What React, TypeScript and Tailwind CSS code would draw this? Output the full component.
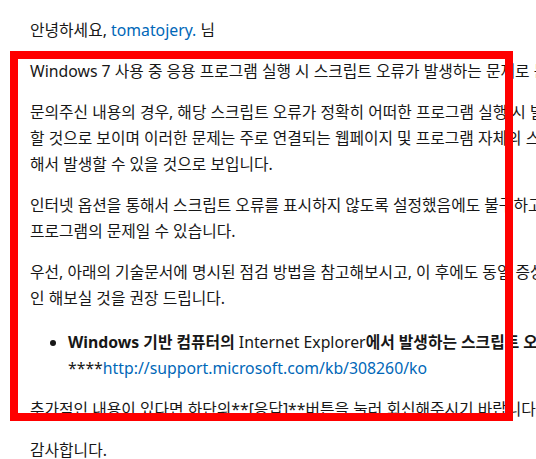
import React from 'react';

const link = 'text-[#0067b8]';

function Line({ children }: { children: React.ReactNode }) {
  return <span className="block whitespace-nowrap">{children}</span>;
}

export default function App() {
  return (
    <div
      className="relative w-[536px] h-[459px] overflow-hidden bg-white text-[#171717] text-[15.8px] leading-[26px]"
      style={{ fontFamily: '"Noto Sans", "Noto Sans CJK KR", sans-serif' }}
    >
      <div className="pl-[30px] pt-[17px]">
        <p className="mb-[15px]">
          안녕하세요, <span className={link}>tomatojery.</span> 님
        </p>
        <p className="mb-[15px]">
          <Line>Windows 7 사용 중 응용 프로그램 실행 시 스크립트 오류가 발생하는 문제로 문의하셨습니다.</Line>
        </p>
        <p className="mb-[15px]">
          <Line>문의주신 내용의 경우, 해당 스크립트 오류가 정확히 어떠한 프로그램 실행 시 발생하는지 확인이 필요</Line>
          <Line>할 것으로 보이며 이러한 문제는 주로 연결되는 웹페이지 및 프로그램 자체의 스크립트 오류로 인</Line>
          <Line>해서 발생할 수 있을 것으로 보입니다.</Line>
        </p>
        <p className="mb-[15px]">
          <Line>인터넷 옵션을 통해서 스크립트 오류를 표시하지 않도록 설정했음에도 불구하고 증상이 지속된다면 해당</Line>
          <Line>프로그램의 문제일 수 있습니다.</Line>
        </p>
        <p className="mb-[18px]">
          <Line>우선, 아래의 기술문서에 명시된 점검 방법을 참고해보시고, 이 후에도 동일 증상이 발생한다면 프로그램 제조사에 확</Line>
          <Line>인 해보실 것을 권장 드립니다.</Line>
        </p>
        <ul className="mb-[15px] pl-[38px] list-disc">
          <li className="whitespace-nowrap">
            <span className="font-bold">Windows 기반 컴퓨터의 </span>
            Internet Explorer
            <span className="font-bold">에서 발생하는 스크립트 오류 해결 방법</span>
            <br />
            ****<span className={link}>http://support.microsoft.com/kb/308260/ko</span>
          </li>
        </ul>
        <p className="mb-[15px]">
          <Line>추가적인 내용이 있다면 하단의**[응답]**버튼을 눌러 회신해주시기 바랍니다.</Line>
        </p>
        <p>감사합니다.</p>
      </div>
      <div className="absolute left-[10px] top-[51px] w-[503px] h-[370px] border-8 border-[#ff0000]" />
    </div>
  );
}
